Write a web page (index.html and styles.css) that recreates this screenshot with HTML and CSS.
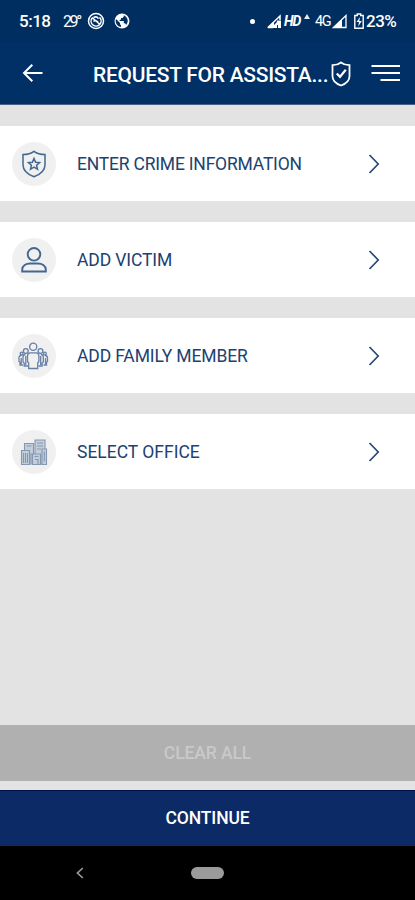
FILE: index.html
```html
<!DOCTYPE html>
<html lang="en">
<head>
<meta charset="utf-8">
<meta name="viewport" content="width=device-width, initial-scale=1">
<title>Request for Assistance</title>
<link rel="stylesheet" href="styles.css">
</head>
<body>
<div class="screen">
  <div class="status">
    <span class="time">5:18</span>
    <span class="temp">29°</span>
    <svg class="ring" width="18" height="18" viewBox="0 0 18 18" fill="none" stroke="#fff"><circle cx="9" cy="9" r="7.500" stroke-width="1.500"/><path d="M5 6.200a5 5 0 1 0 7.500-.8M6.500 5.500c2-1 4-.5 5 1.200M5 5.500l8 7M6.500 9.500c1.500-1.500 3-1 4.500.8" stroke-width="1.500"/></svg>
    <svg class="globe" width="16" height="16" viewBox="0 0 16 16"><circle cx="8" cy="8" r="7.500" fill="#fff"/><path d="M2 6l4 4v1.200l1 1v1.700A6 6 0 0 1 2 6zM9.800 2.300v1.200L8.500 5H7v1.500L5.600 7v1h4.200v2.300h1.300l1.100 1.600A6 6 0 0 0 9.800 2.300z" fill="#002e60"/></svg>
    <div class="status-right">
      <span class="dot"></span>
      <svg class="sig1" width="16" height="15" viewBox="0 0 16 15"><path d="M2 13.500L14 2v4M2 13.500h5" fill="none" stroke="#fff" stroke-width="1.500"/><path d="M1 14l7-6.500V11l3-3v6zM11 6.500h4V14h-3v-3h-1.500z" fill="#fff"/></svg>
      <span class="hd">HD</span>
      <svg class="up" width="6" height="6" viewBox="0 0 6 6"><path d="M3 0l3 5H0z" fill="#e4eaf2"/></svg>
      <span class="fourg">4G</span>
      <svg class="sig2" width="15" height="15" viewBox="0 0 15 15"><path d="M1.500 13.500L14 1.500v12z" fill="none" stroke="#fff" stroke-width="1.300"/><path d="M1 14L10 5v9z" fill="#fff"/></svg>
      <svg class="batt" width="10" height="16" viewBox="0 0 10 16"><path d="M3.300 1h3.400v1.500h2.500v12.700H.8V2.500h2.500z" fill="none" stroke="#fff" stroke-width="1.400"/><path d="M6 4L2.500 9H5l-.8 4.500L7.800 8H5.300z" fill="#fff"/></svg>
      <span class="pct">23%</span>
    </div>
  </div>
  <header class="bar">
    <svg class="back" width="22" height="20" viewBox="0 0 22 20" fill="none" stroke="#fff" stroke-width="2"><path d="M20.500 10H2M10.300 1.700L2 10l8.300 8.300"/></svg>
    <h1>REQUEST FOR ASSISTA...</h1>
    <svg class="shield" width="20" height="26" viewBox="0 0 20 26" fill="none" stroke="#fff" stroke-width="1.800"><path d="M10 1.500c2.600 2 5.300 2.700 8.500 2.700v11c0 4.300-3.600 7.500-8.500 9.300-4.900-1.800-8.500-5-8.500-9.300v-11C4.700 4.200 7.400 3.500 10 1.500z"/><path d="M5.800 12.500l3.200 3.300 5.800-7" stroke-width="2.200"/></svg>
    <svg class="menu" width="29" height="18" viewBox="0 0 29 18" stroke="#fff" stroke-width="2"><path d="M.5 2H29M.5 9H29M9.500 16H29"/></svg>
  </header>
  <main>
    <a class="row">
      <span class="badge"><svg width="26" height="28" viewBox="0 0 26 28" fill="none" stroke="#426790" stroke-width="1.500"><path d="M13 1.300c3 2.300 6.800 3.200 11 3.200v10.300c0 5-4.600 9.600-11 12-6.400-2.400-11-7-11-12V4.500c4.200 0 8-.9 11-3.200z"/><path d="M13 8.500l1.600 3.700 4 .4-3 2.700.9 4-3.500-2.100-3.500 2.100.9-4-3-2.700 4-.4z"/></svg></span>
      <span class="label l1">ENTER CRIME INFORMATION</span>
      <svg class="chev" width="12" height="20" viewBox="0 0 12 20"><path d="M1.500 1l8.700 9-8.700 9"/></svg>
    </a>
    <a class="row">
      <span class="badge"><svg width="26" height="28" viewBox="0 0 26 28" fill="none" stroke="#426790" stroke-width="1.900"><circle cx="13" cy="8.300" r="6.300"/><path d="M1.200 25.500v-1.800c0-4 4-6.200 7.800-6.200h8c3.800 0 7.800 2.200 7.800 6.200v1.800z"/></svg></span>
      <span class="label l2">ADD VICTIM</span>
      <svg class="chev" width="12" height="20" viewBox="0 0 12 20"><path d="M1.500 1l8.700 9-8.700 9"/></svg>
    </a>
    <a class="row">
      <span class="badge"><svg width="32" height="28" viewBox="0 0 32 28" fill="none" stroke="#6680a6" stroke-width="1.300"><path d="M7.500 12.500c-1.800 0-2.500 1-2.500 2.500v5l1.200 1v3H10M22.800 12.500c1.800 0 2.500 1 2.500 2.500v5l-1.200 1v3H20.500M3.500 13.500c-1.700 0-2.500.8-2.500 2.500v3.500l1 .8V23h3M27 13.500c1.700 0 2.500.8 2.500 2.500v3.500l-1 .8V23h-3M7.800 14v9M22.700 14v9M3.200 16v6M27.500 16v6"/><circle cx="7.800" cy="9" r="2.400"/><circle cx="22.500" cy="9" r="2.400"/><circle cx="3.600" cy="11.600" r="1.400"/><circle cx="26.900" cy="11.600" r="1.400"/><circle cx="15.200" cy="4.800" r="3.600"/><path fill="#f0f0f1" d="M10.700 26.500v-5.500l-1.200-1.500V14c0-2 1-3.200 2.800-3.200h5.800c1.800 0 2.800 1.200 2.800 3.200v5.500L19.700 21v5.500z"/></svg></span>
      <span class="label l3">ADD FAMILY MEMBER</span>
      <svg class="chev" width="12" height="20" viewBox="0 0 12 20"><path d="M1.500 1l8.700 9-8.700 9"/></svg>
    </a>
    <a class="row">
      <span class="badge"><svg width="28" height="28" viewBox="0 0 28 28" fill="#c4ceda" stroke="#8598b2" stroke-width="1.100"><path d="M4.500 26V5.500h9V26zM15 26V2h10v24z"/><path d="M1.500 26.500v-14h8v14zM12.500 26.500V16h8v10.500zM22 26.500V11h4.500v15.500z"/><path d="M3.500 15v10M5.500 15v10M7.500 15v10M14.500 18.500h4M15 21.500h3v5M17 5h6M17 8h6M17 11h4M6.500 8h5M24.300 13.500v10M11 15v10"/></svg></span>
      <span class="label l4">SELECT OFFICE</span>
      <svg class="chev" width="12" height="20" viewBox="0 0 12 20"><path d="M1.500 1l8.700 9-8.700 9"/></svg>
    </a>
  </main>
  <div class="actions">
    <button class="clear" disabled><span>CLEAR ALL</span></button>
    <button class="continue"><span>CONTINUE</span></button>
  </div>
  <nav>
    <svg width="8" height="12" viewBox="0 0 8 12" fill="none" stroke="#999" stroke-width="1.700"><path d="M6.800 1L1.500 6l5.300 5"/></svg>
    <span class="pill"></span>
  </nav>
</div>
</body>
</html>
```
FILE: styles.css
```css
* { box-sizing: border-box; }
body { margin: 0; font-family: Roboto, "Liberation Sans", sans-serif; }
.screen { width: 415px; height: 900px; display: flex; flex-direction: column; background: #e3e3e3; overflow: hidden; }
.status { height: 42px; flex: none; background: #002e60; color: #fff; display: flex; align-items: center; padding-left: 19px; white-space: nowrap; }
.status svg { flex: none; }
.time { width: 44px; font-size: 17px; font-weight: 500; letter-spacing: -.5px; }
.temp { width: 25px; font-size: 16px; letter-spacing: -2.4px; }
.ring { margin-left: -1px; }
.globe { margin-left: 9px; }
.status-right { margin-left: auto; padding-right: 18px; display: flex; align-items: center; }
.dot { width: 5px; height: 5px; border-radius: 50%; background: #fff; margin-right: 11px; }
.hd { width: 20px; margin-left: 2px; font-size: 14px; font-weight: 700; font-style: italic; letter-spacing: -1px; }
.up { margin: 0 5px 8px 0; }
.fourg { width: 17px; font-size: 14.5px; letter-spacing: -1.5px; }
.batt { margin-left: 7px; }
.pct { margin-left: 2px; font-size: 17px; font-weight: 500; width: 31px; letter-spacing: -.5px; }
.bar { height: 63px; flex: none; background: #003065; color: #fff; display: flex; align-items: center; padding: 0 15px 0 22px; border-bottom: 1px solid #476386; }
.bar svg { flex: none; }
.bar .shield { margin-top: 2px; }
h1 { margin: 3px 0 0 49px; width: 238px; font-size: 21px; line-height: 26px; font-weight: 500; letter-spacing: -.27px; white-space: nowrap; }
.menu { margin-left: auto; }
main { flex: 1; display: flex; flex-direction: column; gap: 21px; padding-top: 21px; }
.row { height: 75px; background: #fff; display: flex; align-items: center; padding: 0 35px 0 12px; }
.badge { width: 44px; height: 44px; border-radius: 50%; background: #f0f0f1; display: flex; align-items: center; justify-content: center; }
.label { margin-left: 21px; font-size: 17.5px; color: #20426f; white-space: nowrap; }
.l1 { letter-spacing: -.2px; }
.l2, .l3 { letter-spacing: -.12px; }
.chev { margin-left: auto; fill: none; stroke: #284778; stroke-width: 1.700; }
.actions { flex: none; display: flex; flex-direction: column; gap: 9px; }
button { height: 56px; border: 0; padding: 0; font: 500 17.5px Roboto, sans-serif; letter-spacing: -.1px; }
.clear { background: #b0b0b0; color: #c9c9c9; }
.continue { background: #0b2a66; color: #fff; border-top: 1px solid #00104c; padding-bottom: 2px; }
nav { height: 54px; flex: none; background: #000; display: flex; align-items: center; padding-left: 76px; }
.pill { width: 33px; height: 12px; border-radius: 6px; background: #9b9b9b; margin-left: 107px; }
```
